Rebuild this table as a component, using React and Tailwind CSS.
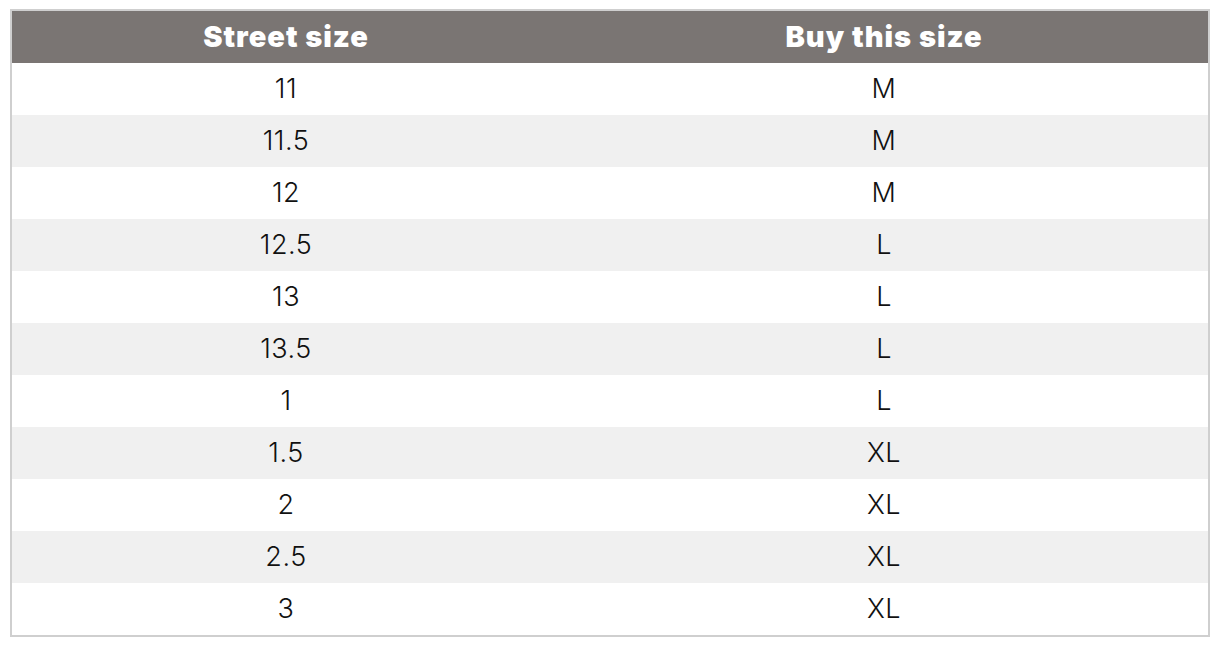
const rows = [
  ['11', 'M'],
  ['11.5', 'M'],
  ['12', 'M'],
  ['12.5', 'L'],
  ['13', 'L'],
  ['13.5', 'L'],
  ['1', 'L'],
  ['1.5', 'XL'],
  ['2', 'XL'],
  ['2.5', 'XL'],
  ['3', 'XL'],
];

export default function App() {
  return (
    <div className="bg-white min-h-screen pt-[9px] pl-[10px] font-['Inter',sans-serif]">
      <div className="w-[1200px] border-2 border-[#cfcfcf]">
        <div className="grid grid-cols-[548px_648px] h-[52px] bg-[#7a7573] text-white text-[29px] font-black tracking-[1px]">
          <div className="flex items-center justify-center">Street size</div>
          <div className="flex items-center justify-center">Buy this size</div>
        </div>
        {rows.map(([street, buy], i) => (
          <div
            key={i}
            className={`grid grid-cols-[548px_648px] h-[52px] text-[27px] text-[#111] font-light tracking-[0.5px] ${i % 2 ? 'bg-[#f0f0f0]' : 'bg-white'}`}
          >
            <div className="flex items-center justify-center">{street}</div>
            <div className="flex items-center justify-center">{buy}</div>
          </div>
        ))}
      </div>
    </div>
  );
}
